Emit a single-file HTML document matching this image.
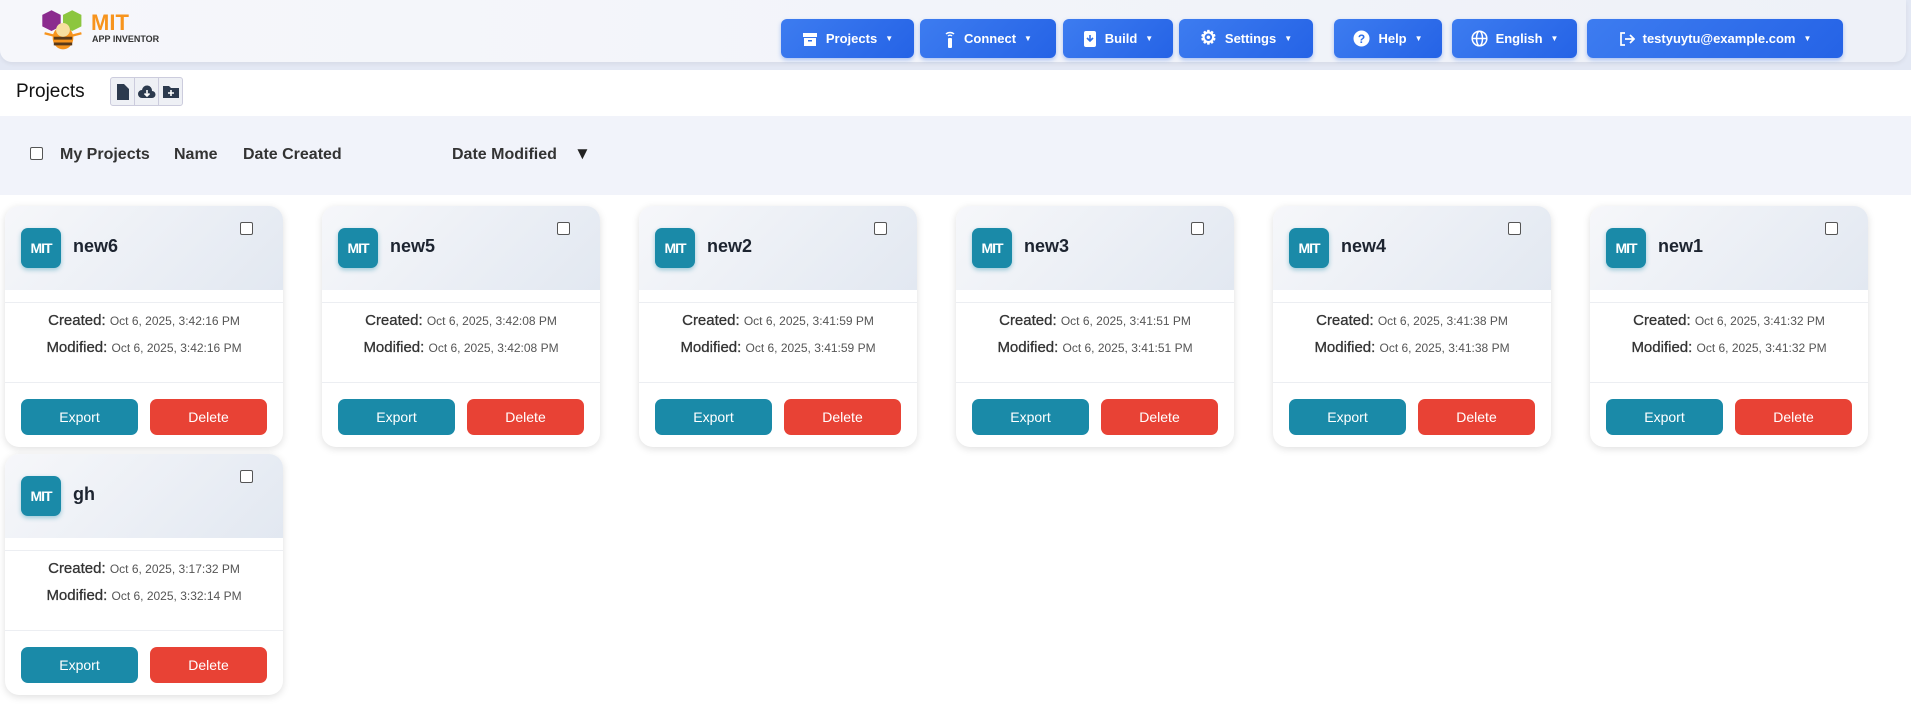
<!DOCTYPE html>
<html><head><meta charset="utf-8"><style>
*{box-sizing:border-box;margin:0;padding:0}
body{width:1911px;height:704px;overflow:hidden;background:#fff;font-family:"Liberation Sans",sans-serif;color:#222;position:relative}
.hdr{position:absolute;left:0;top:0;width:1911px;height:70px;background:#e3e8f4}
.hdr .in{position:absolute;left:0;top:0;width:1906px;height:62px;background:linear-gradient(90deg,#f6f7fb,#eef1f8);border-radius:0 0 12px 12px;box-shadow:0 2px 4px rgba(0,0,0,.06)}
.nb{position:absolute;top:19px;height:39px;border-radius:6px;background:linear-gradient(135deg,#3d7cf0,#2563e6);color:#fff;font-size:13px;font-weight:bold;display:flex;align-items:center;justify-content:center;gap:8px;box-shadow:0 2px 4px rgba(37,99,230,.35)}
.nb small{font-size:8px}
.t{position:absolute;white-space:nowrap}
.band{position:absolute;left:0;top:116px;width:1911px;height:79px;background:#f1f3fa}
.cb{position:absolute;width:13px;height:13px;border:1.5px solid #555;border-radius:2px;background:#fff}
.card{position:absolute;width:278px;height:241px;border-radius:14px;background:#fff;box-shadow:0 2px 8px rgba(0,0,0,.13);overflow:hidden}
.card .h{position:absolute;left:0;top:0;width:100%;height:84px;background:linear-gradient(135deg,#f6f7fa,#e2e8f1)}
.card .ic{position:absolute;left:16px;top:22px;width:40px;height:40px;border-radius:7px;background:#1a8aa8;color:#fff;font-weight:bold;font-size:14px;display:flex;align-items:center;justify-content:center;letter-spacing:-1px;box-shadow:0 2px 5px rgba(26,138,168,.4)}
.card .nm{position:absolute;left:68px;top:30px;font-size:18px;font-weight:bold;color:#1d2430}
.card .l1{position:absolute;left:0;top:96px;width:100%;border-top:1px solid #eceef2}
.card .l2{position:absolute;left:0;top:176px;width:100%;border-top:1px solid #eceef2}
.card .d{position:absolute;left:0;width:100%;text-align:center;font-size:15px;color:#333;-webkit-text-stroke:0.3px #333}
.card .d span{font-size:12px;color:#555;-webkit-text-stroke:0}
.btn{position:absolute;top:193px;width:117px;height:36px;border-radius:7px;color:#fff;font-size:14px;display:flex;align-items:center;justify-content:center}
.ex{left:16px;background:#1a8aa8}.de{left:145px;background:#e84235}
.hd{position:absolute;white-space:nowrap;top:146px;font-size:16px;font-weight:bold;color:#333}
</style></head><body>
<div class="hdr"><div class="in">
<svg style="position:absolute;left:40px;top:8px" width="46" height="46" viewBox="0 0 40 40"><polygon points="10,2 18,6 18,16 10,20 2,16 2,6" fill="#8b2b8e"/><polygon points="28,2 36,6 36,16 28,20 20,16 20,6" fill="#8cc63f"/><ellipse cx="20" cy="26" rx="9" ry="10" fill="#f7941d"/><rect x="12" y="25" width="16" height="2.5" fill="#5a3a1a"/><rect x="12" y="30" width="16" height="2.5" fill="#5a3a1a"/><circle cx="20" cy="19" r="6" fill="#f7dfa0"/><line x1="4" y1="22" x2="12" y2="24" stroke="#f7941d" stroke-width="2"/><line x1="36" y1="22" x2="28" y2="24" stroke="#f7941d" stroke-width="2"/></svg>
<div class="t" style="left:91px;top:10px;font-size:22px;font-weight:bold;color:#f7941d">MIT</div>
<div class="t" style="left:92px;top:34px;font-size:9px;font-weight:bold;color:#333">APP INVENTOR</div>
</div></div>
<div class="nb" style="left:781px;width:133px"><svg width="16" height="16" viewBox="0 0 16 16"><rect x="1" y="2" width="14" height="4" fill="#fff"/><rect x="2" y="7" width="12" height="8" fill="#fff"/><rect x="6" y="9" width="4" height="1.5" fill="#2f6fe8"/></svg>Projects <small>▼</small></div>
<div class="nb" style="left:920px;width:136px"><svg width="12" height="18" viewBox="0 0 12 18"><path d="M2 4a6 6 0 0 1 8 0M4 6a3 3 0 0 1 4 0" stroke="#fff" fill="none" stroke-width="1.5"/><rect x="4" y="8" width="4" height="10" rx="1" fill="#fff"/></svg>Connect <small>▼</small></div>
<div class="nb" style="left:1063px;width:110px"><svg width="14" height="18" viewBox="0 0 14 18"><rect x="1" y="1" width="12" height="16" rx="2" fill="#fff"/><path d="M7 5v6M4 8l3 3 3-3" stroke="#2f6fe8" stroke-width="1.6" fill="none"/></svg>Build <small>▼</small></div>
<div class="nb" style="left:1179px;width:134px"><span style="font-size:19px">⚙</span>Settings <small>▼</small></div>
<div class="nb" style="left:1334px;width:108px"><svg width="17" height="17"><circle cx="8.5" cy="8.5" r="8" fill="#fff"/><text x="8.5" y="13" text-anchor="middle" font-size="12" font-weight="bold" fill="#2f6fe8" font-family="Liberation Sans">?</text></svg>Help <small>▼</small></div>
<div class="nb" style="left:1452px;width:125px"><svg width="17" height="17" viewBox="0 0 17 17" fill="none" stroke="#fff" stroke-width="1.5"><circle cx="8.5" cy="8.5" r="7.3"/><ellipse cx="8.5" cy="8.5" rx="3" ry="7.3"/><line x1="1" y1="8.5" x2="16" y2="8.5"/></svg>English <small>▼</small></div>
<div class="nb" style="left:1587px;width:256px"><svg width="16" height="16" viewBox="0 0 16 16" fill="none" stroke="#fff" stroke-width="1.7"><path d="M6 2H2v12h4M6 8h9M11 4l4 4-4 4"/></svg>testyuytu@example.com <small>▼</small></div>

<div class="t" style="left:16px;top:81px;font-size:19px;color:#111">Projects</div>
<div style="position:absolute;left:110px;top:77px;width:73px;height:29px;border:1px solid #ccd;border-radius:3px;background:#eef0f5;display:flex">
<div style="flex:1;border-right:1px solid #ccd;display:flex;align-items:center;justify-content:center"><svg width="14" height="18"><path d="M1 1h7l5 5v11H1z" fill="#2c3a4e"/></svg></div>
<div style="flex:1;border-right:1px solid #ccd;display:flex;align-items:center;justify-content:center"><svg width="18" height="14"><path d="M4 13a4 4 0 0 1 0-8 5 5 0 0 1 10 1 3.5 3.5 0 0 1 0 7z" fill="#2c3a4e"/><path d="M9 5v6M6.5 8.5 9 11l2.5-2.5" stroke="#fff" stroke-width="1.6" fill="none"/></svg></div>
<div style="flex:1;display:flex;align-items:center;justify-content:center"><svg width="18" height="14"><path d="M1 1h6l2 2h8v10H1z" fill="#2c3a4e"/><path d="M9 5v6M6 8h6" stroke="#fff" stroke-width="1.6"/></svg></div>
</div>
<div class="band"></div>
<div class="cb" style="left:30px;top:147px"></div>
<div class="hd" style="left:60px">My Projects</div>
<div class="hd" style="left:174px">Name</div>
<div class="hd" style="left:243px">Date Created</div>
<div class="hd" style="left:452px">Date Modified</div>
<div class="t" style="left:574px;top:144px;font-size:17px;color:#222">▼</div>

<div class="card" style="left:5px;top:206px"><div class="h"></div><div class="ic">MIT</div><div class="nm">new6</div><div class="cb" style="left:235px;top:16px"></div><div class="l1"></div><div class="d" style="top:106px">Created: <span>Oct 6, 2025, 3:42:16 PM</span></div><div class="d" style="top:133px">Modified: <span>Oct 6, 2025, 3:42:16 PM</span></div><div class="l2"></div><div class="btn ex">Export</div><div class="btn de">Delete</div></div>
<div class="card" style="left:322px;top:206px"><div class="h"></div><div class="ic">MIT</div><div class="nm">new5</div><div class="cb" style="left:235px;top:16px"></div><div class="l1"></div><div class="d" style="top:106px">Created: <span>Oct 6, 2025, 3:42:08 PM</span></div><div class="d" style="top:133px">Modified: <span>Oct 6, 2025, 3:42:08 PM</span></div><div class="l2"></div><div class="btn ex">Export</div><div class="btn de">Delete</div></div>
<div class="card" style="left:639px;top:206px"><div class="h"></div><div class="ic">MIT</div><div class="nm">new2</div><div class="cb" style="left:235px;top:16px"></div><div class="l1"></div><div class="d" style="top:106px">Created: <span>Oct 6, 2025, 3:41:59 PM</span></div><div class="d" style="top:133px">Modified: <span>Oct 6, 2025, 3:41:59 PM</span></div><div class="l2"></div><div class="btn ex">Export</div><div class="btn de">Delete</div></div>
<div class="card" style="left:956px;top:206px"><div class="h"></div><div class="ic">MIT</div><div class="nm">new3</div><div class="cb" style="left:235px;top:16px"></div><div class="l1"></div><div class="d" style="top:106px">Created: <span>Oct 6, 2025, 3:41:51 PM</span></div><div class="d" style="top:133px">Modified: <span>Oct 6, 2025, 3:41:51 PM</span></div><div class="l2"></div><div class="btn ex">Export</div><div class="btn de">Delete</div></div>
<div class="card" style="left:1273px;top:206px"><div class="h"></div><div class="ic">MIT</div><div class="nm">new4</div><div class="cb" style="left:235px;top:16px"></div><div class="l1"></div><div class="d" style="top:106px">Created: <span>Oct 6, 2025, 3:41:38 PM</span></div><div class="d" style="top:133px">Modified: <span>Oct 6, 2025, 3:41:38 PM</span></div><div class="l2"></div><div class="btn ex">Export</div><div class="btn de">Delete</div></div>
<div class="card" style="left:1590px;top:206px"><div class="h"></div><div class="ic">MIT</div><div class="nm">new1</div><div class="cb" style="left:235px;top:16px"></div><div class="l1"></div><div class="d" style="top:106px">Created: <span>Oct 6, 2025, 3:41:32 PM</span></div><div class="d" style="top:133px">Modified: <span>Oct 6, 2025, 3:41:32 PM</span></div><div class="l2"></div><div class="btn ex">Export</div><div class="btn de">Delete</div></div>
<div class="card" style="left:5px;top:454px"><div class="h"></div><div class="ic">MIT</div><div class="nm">gh</div><div class="cb" style="left:235px;top:16px"></div><div class="l1"></div><div class="d" style="top:106px">Created: <span>Oct 6, 2025, 3:17:32 PM</span></div><div class="d" style="top:133px">Modified: <span>Oct 6, 2025, 3:32:14 PM</span></div><div class="l2"></div><div class="btn ex">Export</div><div class="btn de">Delete</div></div>
</body></html>
